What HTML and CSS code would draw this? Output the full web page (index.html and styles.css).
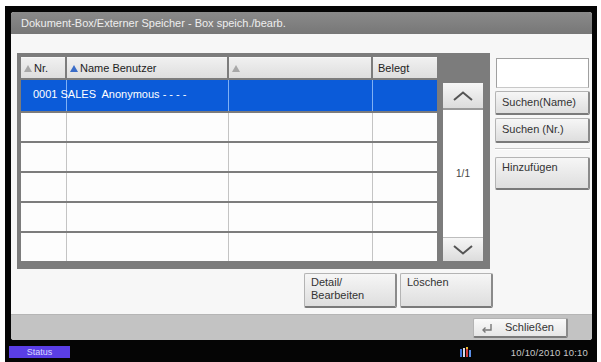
FILE: index.html
```html
<!DOCTYPE html>
<html lang="de">
<head>
    <meta charset="UTF-8">
    <title>Box speich./bearb.</title>
    <link rel="stylesheet" href="styles.css">
</head>
<body>
    <div class="screen">
        <div class="panel">
            <div class="title">Dokument-Box/Externer Speicher - Box speich./bearb.</div>

            <div class="content">
                <div class="main">
                    <div class="list-frame">
                        <div class="list">
                            <div class="head-row">
                                <div class="head-cell w-nr"><span class="sort"></span>Nr.</div>
                                <div class="head-cell w-name"><span class="sort sort-active"></span>Name Benutzer</div>
                                <div class="head-cell w-third"><span class="sort"></span></div>
                                <div class="head-cell w-used">Belegt</div>
                            </div>

                            <div class="row selected">
                                <div class="cell c-nr"><span class="entry">0001 SALES&nbsp; Anonymous - - - -</span></div>
                                <div class="cell c-name"></div>
                                <div class="cell c-third"></div>
                                <div class="cell c-used"></div>
                            </div>
                            <div class="row">
                                <div class="cell c-nr"></div>
                                <div class="cell c-name"></div>
                                <div class="cell c-third"></div>
                                <div class="cell c-used"></div>
                            </div>
                            <div class="row">
                                <div class="cell c-nr"></div>
                                <div class="cell c-name"></div>
                                <div class="cell c-third"></div>
                                <div class="cell c-used"></div>
                            </div>
                            <div class="row">
                                <div class="cell c-nr"></div>
                                <div class="cell c-name"></div>
                                <div class="cell c-third"></div>
                                <div class="cell c-used"></div>
                            </div>
                            <div class="row">
                                <div class="cell c-nr"></div>
                                <div class="cell c-name"></div>
                                <div class="cell c-third"></div>
                                <div class="cell c-used"></div>
                            </div>
                            <div class="row">
                                <div class="cell c-nr"></div>
                                <div class="cell c-name"></div>
                                <div class="cell c-third"></div>
                                <div class="cell c-used"></div>
                            </div>
                        </div>

                        <div class="pager">
                            <div class="pg-btn pg-up">
                                <svg width="20" height="10" viewBox="0 0 20 10"><path d="M1 9 L10 1.5 L19 9" fill="none" stroke="#555" stroke-width="2"/></svg>
                            </div>
                            <div class="pg-count">1/1</div>
                            <div class="pg-btn pg-down">
                                <svg width="20" height="10" viewBox="0 0 20 10"><path d="M1 1 L10 8.5 L19 1" fill="none" stroke="#555" stroke-width="2"/></svg>
                            </div>
                        </div>
                    </div>

                    <div class="actions">
                        <div class="btn btn-action">Detail/<br>Bearbeiten</div>
                        <div class="btn btn-action">Löschen</div>
                    </div>
                </div>

                <div class="side">
                    <div class="search-box"></div>
                    <div class="btn btn-side">Suchen(Name)</div>
                    <div class="btn btn-side btn-nr">Suchen (Nr.)</div>
                    <div class="sep"></div>
                    <div class="btn btn-side btn-tall">Hinzufügen</div>
                </div>
            </div>

            <div class="footer">
                <div class="btn btn-close">
                    <svg width="12" height="10" viewBox="0 0 12 10"><path d="M10 1 V7 H2.5" fill="none" stroke="#777" stroke-width="1.4"/><path d="M4.5 4.5 L2 7 L4.5 9.5" fill="none" stroke="#777" stroke-width="1.4"/></svg>
                    <span>Schließen</span>
                </div>
            </div>
        </div>

        <div class="status">
            <div class="status-btn">Status</div>
            <div class="status-right">
                <div class="bars">
                    <span class="bar b1"></span><span class="bar b2"></span><span class="bar b3"></span><span class="bar b4"></span>
                </div>
                <div class="clock">10/10/2010 10:10</div>
            </div>
        </div>
    </div>
</body>
</html>
```

FILE: styles.css
```css
* {
    margin: 0;
    padding: 0;
    box-sizing: border-box;
}

body {
    background: #ffffff;
    font-family: 'Liberation Sans', Arial, sans-serif;
    font-size: 11px;
    color: #333;
}

.screen {
    margin: 6px 4px 0 5px;
    height: 356px;
    background: #050505;
    padding: 6px 5px 0 0;
    display: flex;
    flex-direction: column;
}

.panel {
    margin-left: 6px;
    height: 328px;
    background: #f7f7f7;
    border-radius: 3px;
    overflow: hidden;
    display: flex;
    flex-direction: column;
}

.title {
    height: 22px;
    line-height: 22px;
    padding-left: 10px;
    background: linear-gradient(#8a8a8a, #777);
    color: #eeeeee;
    font-size: 11px;
}

.content {
    height: 280px;
    display: flex;
    gap: 2px;
}

.main {
    width: 482px;
    padding: 19px 0 0 6px;
    display: flex;
    flex-direction: column;
}

.list-frame {
    width: 473px;
    height: 216px;
    background: #7c7c7c;
    padding: 4px 7px 0 4px;
    display: flex;
    gap: 6px;
}

.list {
    width: 416px;
    display: flex;
    flex-direction: column;
    gap: 2px;
}

.head-row {
    height: 21px;
    display: flex;
    gap: 2px;
}

.head-cell {
    background: linear-gradient(#f0f0f0, #dedede);
    border-top: 1px solid #f8f8f8;
    color: #222;
    line-height: 19px;
    padding-left: 3px;
    display: flex;
    align-items: center;
    white-space: nowrap;
}

.w-nr { width: 44px; }
.w-name { width: 160px; }
.w-third { width: 142px; }
.w-used { width: 64px; padding-left: 5px; }

.sort {
    width: 0;
    height: 0;
    border-left: 4px solid transparent;
    border-right: 4px solid transparent;
    border-bottom: 7px solid #a8a8a8;
    margin-right: 2px;
}

.sort-active {
    border-bottom-color: #3a6cc8;
}

.row {
    height: 28px;
    display: flex;
    background: #fdfdfd;
}

.row.selected {
    height: 31px;
    background: #0b5bd9;
    color: #fff;
}

.cell {
    height: 100%;
    border-right: 1px solid #c4c4c4;
}

.selected .cell {
    border-right-color: #7fb0f4;
}

.c-nr { width: 46px; }
.c-name { width: 162px; }
.c-third { width: 144px; }
.c-used { width: 64px; border-right: none; }

.entry {
    display: block;
    padding: 8px 0 0 12px;
    white-space: nowrap;
    color: #ffffff;
}

.pager {
    width: 40px;
    margin-top: 26px;
    display: flex;
    flex-direction: column;
}

.pg-btn {
    display: flex;
    align-items: center;
    justify-content: center;
    background: linear-gradient(#f6f6f6, #dcdcdc);
    border-bottom: 2px solid #9a9a9a;
}

.pg-up { height: 27px; }
.pg-down { height: 24px; border-bottom: none; border-top: 1px solid #bdbdbd; }

.pg-count {
    height: 127px;
    background: #ffffff;
    display: flex;
    align-items: center;
    justify-content: center;
    font-size: 10px;
    color: #444;
}

.actions {
    margin-top: 4px;
    display: flex;
    justify-content: flex-end;
    gap: 3px;
}

.btn {
    background: linear-gradient(#f6f6f6, #dedede);
    border: 1px solid #b4b4b4;
    border-right: 2px solid #8a8a8a;
    border-bottom: 2px solid #7a7a7a;
    border-radius: 2px;
    color: #333;
    padding: 2px 6px;
    line-height: 13px;
}

.btn-action {
    width: 93px;
    height: 35px;
}

.side {
    width: 95px;
    padding-top: 24px;
    display: flex;
    flex-direction: column;
}

.search-box {
    width: 93px;
    height: 30px;
    margin-left: 1px;
    background: #ffffff;
    border: 1px solid #a0a0a0;
    border-bottom-color: #c8c8c8;
}

.btn-side {
    margin-top: 3px;
    height: 24px;
    padding-top: 4px;
}

.btn-nr {
    height: 25px;
}

.sep {
    margin: 5px 0 7px;
    height: 2px;
    border-top: 1px solid #c8c8c8;
    border-bottom: 1px solid #ffffff;
}

.btn-tall {
    margin-top: 0;
    height: 33px;
    padding-top: 3px;
}

.footer {
    height: 26px;
    background: #c3c3c3;
    border-top: 1px solid #b5b5b5;
    display: flex;
    justify-content: flex-end;
    padding: 3px 24px 0 0;
}

.btn-close {
    width: 95px;
    height: 20px;
    display: flex;
    align-items: center;
    gap: 12px;
    padding: 0 7px;
    background: linear-gradient(#fafafa, #e6e6e6);
}

.status {
    height: 22px;
    display: flex;
    align-items: center;
    justify-content: space-between;
    padding: 2px 4px 0 4px;
}

.status-btn {
    width: 61px;
    height: 12px;
    background: #5a3ee6;
    color: #d8d8ff;
    font-size: 9px;
    line-height: 12px;
    text-align: center;
}

.status-right {
    display: flex;
    align-items: center;
    gap: 40px;
}

.bars {
    display: flex;
    align-items: flex-end;
    gap: 1px;
    height: 10px;
}

.bar {
    width: 2px;
    display: block;
}

.b1 { height: 8px; background: #3f74dd; }
.b2 { height: 9px; background: #d8d8e8; }
.b3 { height: 10px; background: #d33a3a; border-top: 2px solid #e6b830; }
.b4 { height: 7px; background: #5b8fe8; }

.clock {
    color: #c8c8c8;
    font-size: 9.5px;
    letter-spacing: 0.2px;
}
```
